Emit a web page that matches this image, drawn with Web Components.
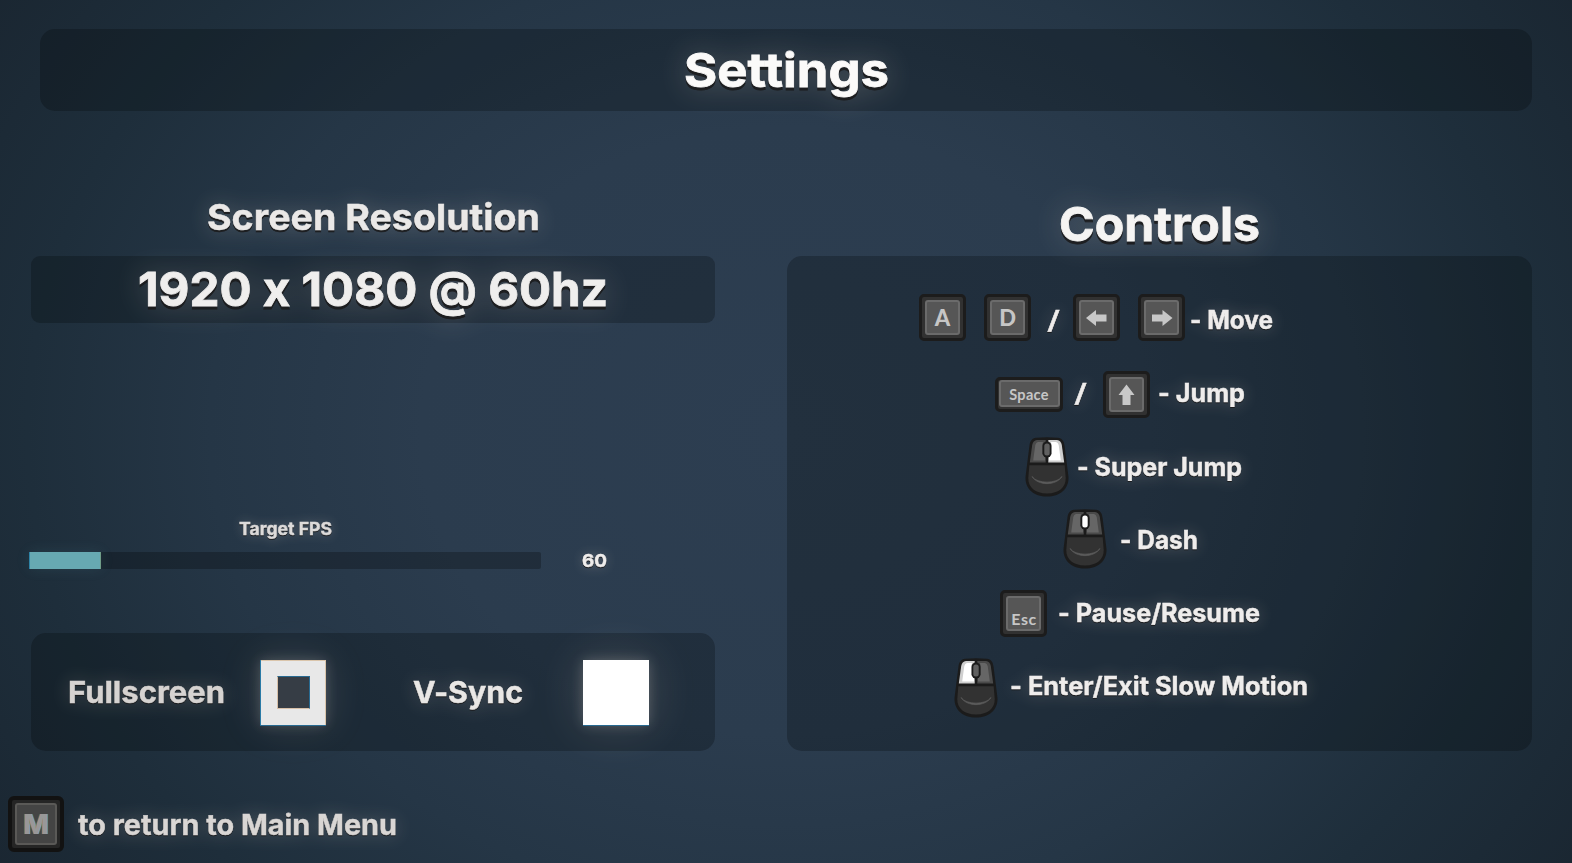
<!DOCTYPE html>
<html lang="en">
<head>
<meta charset="utf-8">
<title>Settings</title>
<style>
html,body{margin:0;height:100%;overflow:hidden;background:#1c2a36}
body{font-family:Inter,"Open Sans",sans-serif}
</style>
</head>
<body>
<settings-screen></settings-screen>
<script>
// Glowing game label, stretched to a fixed width.
class GameLabel extends HTMLElement {
  connectedCallback() {
    const w = +this.getAttribute('w'), s = +this.getAttribute('size');
    const drop = s > 40 ? 3.2 : s > 33 ? 2.5 : s > 20 ? 1.8 : 1.2;
    const root = this.attachShadow({ mode: 'open' });
    root.innerHTML = `<style>
      :host{display:block;flex:none;width:${w}px;height:${s}px;color:#efedec}
      svg{display:block;overflow:visible;filter:drop-shadow(0 ${drop}px .4px rgba(27,27,28,.9)) drop-shadow(0 0 ${(s / 3.2).toFixed(1)}px rgba(255,235,220,.2))}
      text{font:${this.getAttribute('weight') || 700} ${s}px Inter,sans-serif;font-feature-settings:"calt" 0,"case" 0;fill:currentColor;stroke:currentColor;stroke-width:${s > 40 ? .8 : .45}px}
    </style><svg width="${w}" height="${s}"><text x="0" y="${s}" textLength="${w}" lengthAdjust="spacingAndGlyphs"></text></svg>`;
    root.querySelector('text').textContent = this.getAttribute('text');
  }
}
customElements.define('game-label', GameLabel);

// Keyboard key cap.
class KeyCap extends HTMLElement {
  connectedCallback() {
    const kind = this.getAttribute('kind') || '';
    const arrows = {
      left: 'M13 24 23 16V20.5H33.5V27.5H23V32Z',
      right: 'M34.5 24 24.5 16V20.5H14V27.5H24.5V32Z',
      up: 'M23.5 13.5 31.5 24H27.5V34H19.5V24H15.5Z'
    };
    this.attachShadow({ mode: 'open' }).innerHTML = `<style>
      :host{display:block;flex:none;width:47px;height:47px;box-sizing:border-box;background:#313131;border:3.5px solid #1c1c1c;border-radius:5px;padding:3px;font:900 22px Lato,sans-serif;color:#c6c6c6;position:relative}
      .top{box-sizing:border-box;width:100%;height:35px;border:2px solid #6b6b6b;border-radius:3px;background:#565656;display:flex;align-items:center;justify-content:center;line-height:1;padding-top:1px}
      :host([kind=space]){width:68px;height:35px;padding:.5px}
      :host([kind=space]) .top{height:27px;font:700 14.5px Lato,sans-serif;letter-spacing:.3px;padding-top:1px}
      :host([kind=esc]) .top{font-size:16px;font-weight:700;align-items:flex-end;padding-bottom:2px;padding-left:1px;letter-spacing:.5px}
      :host([kind=menu]){width:56px;height:56px;background:#252525;border:4px solid #121212;border-radius:6px;padding:3px}
      :host([kind=menu]) .top{height:42px;padding:0;border-color:#5a5957;background:#444;font:700 27px Inter,sans-serif;color:#989898;text-shadow:-1px 0 #a48561,1px 0 #6398b4}
      svg{position:absolute;left:0;top:0;margin:-3.5px}
    </style><div class="top"><slot></slot></div>` +
      (arrows[kind] ? `<svg width="47" height="47"><path d="${arrows[kind]}" fill="#c8c8c8"/></svg>` : '');
  }
}
customElements.define('key-cap', KeyCap);

// Mouse with one highlighted button: left, right or wheel.
class MouseIcon extends HTMLElement {
  connectedCallback() {
    const on = this.getAttribute('on');
    const a = on === 'left' ? ['#cfcfcf', '#fff'] : ['#4a4a4a', '#666'];
    const b = on === 'right' ? ['#cfcfcf', '#fff'] : ['#4a4a4a', '#666'];
    this.attachShadow({ mode: 'open' }).innerHTML = `<style>
      :host{display:block;flex:none;width:44px;height:60px}svg{display:block;overflow:visible;margin-left:-.5px;margin-top:-.2px}
    </style><svg width="44" height="60" viewBox="0 0 44 60">
      <path d="M11 .8Q22-.4 33 .8C37 1.2 39 4 39.6 9L43.5 40C44 52 35 59.5 22 59.5S0 52 .5 40L4.400 9C5 4 7 1.200 11 .8Z" fill="#1b1b1b"/>
      <path d="M4.300 28.300H39.700L40.700 41C41 50 34 56.500 22 56.500S3 50 3.300 41Z" fill="#323232"/>
      <path d="M12 3H21V25.500H4.800L7.200 8Q8 3.400 12 3Z" fill="${a[0]}"/>
      <path d="M13 5H18L17 9V17L20 20V23.500H8.200L10.300 8Q11 5.300 13 5Z" fill="${a[1]}"/>
      <path d="M23 3H32Q36 3.400 36.800 8L39.200 25.500H23Z" fill="${b[0]}"/>
      <path d="M26 5H31Q33 5.300 33.700 8L35.800 23.500H24V20L27 17V9Z" fill="${b[1]}"/>
      <rect x="17.600" y="4.500" width="8.800" height="16" rx="4.200" fill="#1b1b1b"/>
      <path d="M22 2V27" stroke="#1b1b1b" stroke-width="2.600"/>
      <rect x="19.300" y="6.500" width="5.400" height="12" rx="2.500" fill="${on === 'wheel' ? '#fff' : '#606060'}"/>
      <path d="M7 39.500C13 49 31 49 37 39.500C32 47 12 47 7 39.500Z" fill="#5c5c5c" stroke="#5c5c5c" stroke-width=".7"/>
    </svg>`;
  }
}
customElements.define('mouse-icon', MouseIcon);

class ToggleBox extends HTMLElement {
  connectedCallback() {
    this.attachShadow({ mode: 'open' }).innerHTML = `<style>
      :host{display:grid;place-items:center;flex:none;width:66px;height:65px;background:#fff;box-shadow:0 1px 0 #286a91,0 0 12px rgba(255,242,230,.22),0 0 50px rgba(255,235,220,.16)}
      :host(:not([checked])){background:#e8e8e8;box-shadow:inset 1px 0 0 #2b7ba6,inset -1px 0 0 #dac5ab,inset 0 1px 0 #dac5ab,0 1px 0 #286a91,0 0 12px rgba(255,242,230,.2),0 0 44px rgba(255,235,220,.13)}
      i{width:33px;height:33px;box-sizing:border-box;background:#363d45;border:1px solid #286a91;border-left-color:#d7c0a8;border-bottom-color:#d7c0a8;margin-top:-1px}
      :host([checked]) i{display:none}
    </style><i></i>`;
  }
}
customElements.define('toggle-box', ToggleBox);

class FpsSlider extends HTMLElement {
  connectedCallback() {
    this.attachShadow({ mode: 'open' }).innerHTML = `<style>
      :host{display:block;flex:none;width:512px;height:17px;background:rgba(0,0,0,.25);border-radius:0 2px 2px 0}
      div{height:17px;width:72px;box-sizing:border-box;background:#67a9b2;border-left:1px solid #2f84a7;border-right:1px solid #6f9d88;box-shadow:0 0 14px rgba(100,180,190,.12)}
    </style><div></div>`;
  }
}
customElements.define('fps-slider', FpsSlider);

class DarkPanel extends HTMLElement {
  connectedCallback() {
    this.attachShadow({ mode: 'open' }).innerHTML = `<style>
      :host{display:flex;box-sizing:border-box;flex:none;background:rgba(2,5,6,.24);border-radius:15px}
    </style><slot></slot>`;
  }
}
customElements.define('dark-panel', DarkPanel);

class SettingsScreen extends HTMLElement {
  connectedCallback() {
    this.attachShadow({ mode: 'open' }).innerHTML = `<style>
      :host{display:flex;flex-direction:column;width:1572px;height:863px;overflow:hidden;
        background:radial-gradient(ellipse 960px 800px at 50% 50%,#2d3e51 0,#2b3c4e 38%,#253646 60%,#1e2e3b 79%,#1a2631 100%)}
      .title{height:82px;margin:29px 40px 0;justify-content:center;padding:10.500px 0 0 0}
      .cols{display:flex;height:640px;margin-left:31px}
      .left{width:684px;display:flex;flex-direction:column}
      .right{width:745px;margin-left:72px;display:flex;flex-direction:column;align-items:center}
      .res{width:684px;height:67px;border-radius:9px;justify-content:center;padding-top:3.300px;margin-top:26px}
      .fps{display:flex;margin:17px 0 0 -2px}
      .toggles{width:684px;height:118px;margin-top:64px;padding-left:36.500px;align-items:flex-start}
      .controls{width:745px;height:495px;margin-top:15.500px;flex-direction:column}
      .row{display:flex;height:73.300px;flex:none;align-items:flex-start}
      .foot{display:flex;margin:45px 0 0 8px}
      .toggles toggle-box{margin-top:27px}
      .toggles game-label{margin-top:40px}
      .row game-label{margin-top:48px}
    </style>
    <dark-panel class="title"><game-label text="Settings" w="205" size="47" style="color:#fbfaf9"></game-label></dark-panel>
    <div class="cols">
      <section class="left">
        <game-label text="Screen Resolution" w="333" size="36" style="margin:83px auto 0;color:#eae8e7"></game-label>
        <dark-panel class="res"><game-label text="1920 x 1080 @ 60hz" w="470" size="47" style="color:#efeeed"></game-label></dark-panel>
        <game-label text="Target FPS" w="93" size="17" style="margin:195px 0 0 208px;color:#dddbda"></game-label>
        <div class="fps"><fps-slider></fps-slider><game-label text="60" w="25" size="18" style="margin:-3px 0 0 40.500px"></game-label></div>
        <dark-panel class="toggles">
          <game-label text="Fullscreen" w="157" size="30" style="color:#d6d3d1"></game-label>
          <toggle-box style="margin-left:35.500px"></toggle-box>
          <game-label text="V-Sync" w="110" size="30" style="margin-left:87px;color:#e9e7e5"></game-label>
          <toggle-box checked style="margin-left:60px"></toggle-box>
        </dark-panel>
      </section>
      <section class="right">
        <game-label text="Controls" w="201" size="47" style="margin-top:82.500px;color:#f5f4f3"></game-label>
        <dark-panel class="controls">
          <div class="row" style="padding-left:132px">
            <key-cap style="margin-top:38px">A</key-cap><key-cap style="margin:38px 0 0 18px">D</key-cap>
            <game-label text="/" w="13" size="25" weight="500" style="margin-left:16px;padding-bottom:1px"></game-label>
            <key-cap kind="left" style="margin:38px 0 0 13px"></key-cap><key-cap kind="right" style="margin:38px 0 0 18px"></key-cap>
            <game-label text="- Move" w="83" size="25" style="margin-left:4.500px"></game-label>
          </div>
          <div class="row" style="padding-left:208px">
            <key-cap kind="space" style="margin-top:47.500px">Space</key-cap>
            <game-label text="/" w="13" size="25" weight="500" style="margin-left:11px"></game-label>
            <key-cap kind="up" style="margin:42px 0 0 16px"></key-cap>
            <game-label text="- Jump" w="87" size="25" style="margin-left:7.500px"></game-label>
          </div>
          <div class="row" style="padding-left:238.500px">
            <mouse-icon on="right" style="margin-top:35px"></mouse-icon>
            <game-label text="- Super Jump" w="165" size="25" style="margin-left:7px"></game-label>
          </div>
          <div class="row" style="padding-left:276px">
            <mouse-icon on="wheel" style="margin-top:33px"></mouse-icon>
            <game-label text="- Dash" w="78" size="25" style="margin-left:13px"></game-label>
          </div>
          <div class="row" style="padding-left:213px">
            <key-cap kind="esc" style="margin-top:41px">Esc</key-cap>
            <game-label text="- Pause/Resume" w="202" size="25" style="margin-left:10.500px"></game-label>
          </div>
          <div class="row" style="padding-left:167px">
            <mouse-icon on="left" style="margin-top:35.500px"></mouse-icon>
            <game-label text="- Enter/Exit Slow Motion" w="298" size="25" style="margin-left:11.500px"></game-label>
          </div>
        </dark-panel>
      </section>
    </div>
    <div class="foot"><key-cap kind="menu">M</key-cap><game-label text="to return to Main Menu" w="319" size="29" style="margin:10px 0 0 14px;color:#d9d6d4"></game-label></div>`;
  }
}
customElements.define('settings-screen', SettingsScreen);
</script>
</body>
</html>
